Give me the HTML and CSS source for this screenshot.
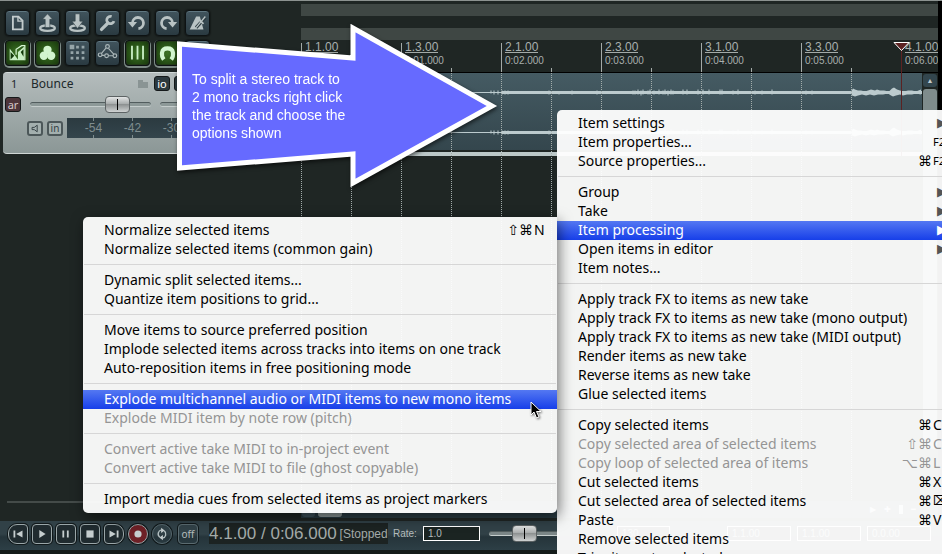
FILE: index.html
```html
<!DOCTYPE html>
<html lang="en">
<head>
<meta charset="utf-8">
<title>Bounce</title>
<link rel="stylesheet" href="styles.css">
</head>
<body>
<div class="app">
  <main class="workspace">
    <section class="side">
      <div class="toolbar">
        <button class="tool" aria-label="New project"><svg viewBox="0 0 25 26"><path d="M7.500 6h6l4.500 4.500V20H7.500z" fill="none" stroke="#c3cccd" stroke-width="2"/><path d="M13 6v5h5" fill="none" stroke="#c3cccd" stroke-width="1.500"/></svg></button>
        <button class="tool" aria-label="Open project"><svg viewBox="0 0 25 26"><ellipse cx="12.500" cy="18.500" rx="8" ry="3" fill="none" stroke="#b9c3c4" stroke-width="2.500"/><path d="M12.500 3l5.500 6h-3v9h-5V9H7z" fill="#b9c3c4" stroke="#2c3b41" stroke-width=".6"/></svg></button>
        <button class="tool" aria-label="Save project"><svg viewBox="0 0 25 26"><ellipse cx="12.500" cy="18.500" rx="8" ry="3" fill="none" stroke="#b9c3c4" stroke-width="2.500"/><path d="M10 3h5v8h3.500l-6 8-6-8H10z" fill="#b9c3c4" stroke="#2c3b41" stroke-width=".6"/></svg></button>
        <button class="tool" aria-label="Project settings"><svg viewBox="0 0 25 26"><path d="M6 20l7-7" stroke="#b9c3c4" stroke-width="3.500" stroke-linecap="round"/><path d="M17 6a4 4 0 1 0 2.500 5" fill="none" stroke="#b9c3c4" stroke-width="3"/></svg></button>
        <button class="tool" aria-label="Undo"><svg viewBox="0 0 25 26"><path d="M7 13a6 6 0 1 1 6.500 6" fill="none" stroke="#b9c3c4" stroke-width="3"/><path d="M2 12h10l-5 6z" fill="#b9c3c4"/></svg></button>
        <button class="tool" aria-label="Redo"><svg viewBox="0 0 25 26"><path d="M18 13a6 6 0 1 0-6.500 6" fill="none" stroke="#b9c3c4" stroke-width="3"/><path d="M23 12H13l5 6z" fill="#b9c3c4"/></svg></button>
        <button class="tool" aria-label="Metronome"><svg viewBox="0 0 25 26"><path d="M4 20L11 6h4l4 14z" fill="#b9c3c4"/><path d="M11 18L21 7" stroke="#2c3b41" stroke-width="3.500"/><path d="M11 18L21 6" stroke="#b9c3c4" stroke-width="1.500"/><path d="M15 10l4 4" stroke="#b9c3c4" stroke-width="2"/></svg></button>
        <button class="tool lit" aria-label="Auto-crossfade"><svg viewBox="0 0 25 26"><path d="M4 8l9 12V12l7-6v15H4z" fill="#c9efc5"/><path d="M5 12l4 4-4 4z M16 12l3-3v8z" fill="#123909"/><path d="M11 15V9l6-4h3.500v16" fill="none" stroke="#d8f7d4" stroke-width="1.300"/></svg></button>
        <button class="tool lit" aria-label="Item grouping"><svg viewBox="0 0 25 26"><g fill="#d2f5cf"><circle cx="12.500" cy="9.500" r="4.500"/><circle cx="8.500" cy="16" r="4.500"/><circle cx="16.500" cy="16" r="4.500"/></g></svg></button>
        <button class="tool" aria-label="Ripple editing"><svg viewBox="0 0 25 26"><path d="M4 4h5v5H4z M11 5h3v3h-3z M17 5h3v3h-3z M5 11h3v3H5z M11 11h3v3h-3z M17 11h3v3h-3z M5 17h3v3H5z M11 17h3v3h-3z M17 17h3v3h-3z" fill="#96a5a9"/></svg></button>
        <button class="tool" aria-label="Envelopes"><svg viewBox="0 0 25 26"><g fill="none" stroke="#aab6b8" stroke-width="1.300"><circle cx="4.500" cy="15" r="2"/><circle cx="12.500" cy="6" r="2"/><circle cx="11.500" cy="16" r="2"/><circle cx="20.500" cy="16" r="2"/><path d="M6 13.500l5-6M13.500 8l6 6.500M6.500 15.500h3M13.500 16h5"/></g></svg></button>
        <button class="tool lit" aria-label="Grid lines"><svg viewBox="0 0 25 26"><path d="M6.500 5v15M12.500 5v15M18.500 5v15" stroke="#c9efc5" stroke-width="2"/></svg></button>
        <button class="tool lit" aria-label="Snapping"><svg viewBox="0 0 25 26"><path d="M8.500 20c-3-4-3.500-12 4-12s7 8 4 12" fill="none" stroke="#d2f5cf" stroke-width="4.500"/></svg></button>
        <button class="tool" aria-label="Locking"></button>
      </div>

      <article class="track">
        <div class="track-head">
          <span class="track-no">1</span>
          <span class="track-name">Bounce</span>
          <svg class="folder" viewBox="0 0 10 8"><path d="M0 0h5v2h5v6H0z"/></svg>
          <button class="chip dark">io</button>
          <button class="chip dark" aria-label="Effects"></button>
        </div>
        <div class="track-mix">
          <button class="chip arm">ar</button>
          <input class="slider volume" type="range" min="0" max="100" value="78" aria-label="Volume">
          <input class="slider pan" type="range" min="0" max="100" value="50" aria-label="Pan">
        </div>
        <div class="track-meter">
          <button class="chip light" aria-label="Monitor"><svg viewBox="0 0 16 15"><path d="M4 6h3l4-3v9L7 9H4z" fill="none" stroke="#344044" stroke-width="1.300"/></svg></button>
          <button class="chip light">in</button>
          <div class="meter"><span>-54</span><span>-42</span><span>-30</span></div>
        </div>
      </article>
      <div class="side-line"></div>
    </section>

    <section class="arrange">
      <div class="lane"></div>
      <div class="lane"></div>
      <div class="ruler">
        <div class="mark"><b>1.1.00</b></div>
        <div class="mark"><b>1.3.00</b><i>0:01.000</i></div>
        <div class="mark"><b>2.1.00</b><i>0:02.000</i></div>
        <div class="mark"><b>2.3.00</b><i>0:03.000</i></div>
        <div class="mark"><b>3.1.00</b><i>0:04.000</i></div>
        <div class="mark"><b>3.3.00</b><i>0:05.000</i></div>
        <div class="mark last"><b>4.1.00</b><i>0:06.00</i></div>
      </div>
      <div class="tracks">
        <div class="canvas">
          <div class="item">
            <svg viewBox="0 0 621 77" width="621" height="77">
              <defs>
                <g id="wave" stroke="#bccbce">
                  <path d="M0 0H200"/>
                  <path d="M200 0H621" stroke-width="3"/>
                  <path d="M190-2v3M193-2v4M197-2v4M201-2v4M204-2v4M207-2v4M248-2v4M258-1v3M271-2v4M296-2v4"/>
                  <path d="M332-2v4M334-2v4M337-3v5M340-2v5M342-3v5M347-2v4M349-3v5M353-2v4M358-3v5M362-2v4M364-3v5M367-2v5M370-3v5M372-2v4M382-3v5M386-3v5M397-3v5M402-3v5M408-3v5M419-3v5M421-3v5M432-2v4M437-3v5M454-2v4M461-2v4M471-3v5M505-2v4M511-2v4"/>
                  <path stroke="none" fill="#bccbce" d="M550-1l2-3 2 1 3 1 3 0 4 1 3-1 3-1 4 1 2-1 3 1 4 0 5 1 3-3 2-1 3 2 3 1 4 1 4-1 4 0 4 1 5-2V2l-5-1-4 1-5 0-4 1-3-1-4 1-3 1-2-1-3-2-5 1-5 0-4 1-4-1-4 1-4-1-4 1-3 1-3-1z"/>
                </g>
              </defs>
              <use href="#wave" y="19.500"/>
              <use href="#wave" y="59.500"/>
            </svg>
          </div>
          <div class="grid-lines"></div>
          <div class="edit-cursor"><svg viewBox="0 0 17 10"><path d="M1 .5h15L8.500 8.500z" fill="#5b2222" stroke="#fff"/></svg></div>
        </div>
        <div class="vscroll"><button aria-label="Scroll up">▲</button><div></div></div>
      </div>
      <div class="hscroll"><button aria-label="Scroll left">◀</button><div class="hthumb"></div><div class="zoomers"><button aria-label="Scroll right">▶</button><button aria-label="Zoom in">✚</button><span></span><button aria-label="Zoom out">━</button></div></div>
    </section>
  </main>

  <footer class="transport">
    <div class="play-keys">
      <button class="key first" aria-label="Go to start"><svg viewBox="0 0 20 20"><path d="M5 6h2v8H5z M15 6v8l-7-4z"/></svg></button>
      <button class="key" aria-label="Play"><svg viewBox="0 0 20 20"><path d="M7 5.500l7 4.500-7 4.500z"/></svg></button>
      <button class="key" aria-label="Pause"><svg viewBox="0 0 20 20"><path d="M6 6h2v8H6z M11 6h2v8h-2z"/></svg></button>
      <button class="key" aria-label="Stop"><svg viewBox="0 0 20 20"><path d="M6 6h8v8H6z"/></svg></button>
      <button class="key end" aria-label="Go to end"><svg viewBox="0 0 20 20"><path d="M13 6h2v8h-2z M5 6v8l7-4z"/></svg></button>
      <button class="key record" aria-label="Record"><svg viewBox="0 0 20 20"><circle cx="10" cy="10" r="4"/></svg></button>
      <button class="key loop" aria-label="Repeat"><svg viewBox="0 0 20 20"><path d="M7.500 13.500a4.500 4.500 0 0 1 2-8M12.500 6.500a4.500 4.500 0 0 1-2 8" fill="none" stroke="#b4c0c2" stroke-width="1.500"/><path d="M9 3l4 3-4 3z M11 11l-4 3 4 3z"/></svg></button>
    </div>
    <button class="key off">off</button>
    <output class="clock"><span>4.1.00 / 0:06.000</span><small>[Stopped</small></output>
    <label class="rate" for="rate">Rate:</label>
    <input class="field" id="rate" value="1.0">
    <input class="slider speed" type="range" min="0" max="100" value="50" aria-label="Play rate">
    <input class="field" id="bpm" aria-label="Tempo" value="130">
    <input class="field wide" id="sel" aria-label="Selection start" value="1.1.00">
    <input class="field wide" aria-label="Selection end" value="1.1.00">
    <input class="field wide" aria-label="Selection length" value="0.0.00">
  </footer>

  <aside class="callout">
    <svg viewBox="0 0 324 166"><path d="M5.500 20L179 34V4L318 82 179 159v-29L5.500 144z" fill="#666aff" stroke="#fff" stroke-width="5"/></svg>
    <p>To split a stereo track to<br>2 mono tracks right click<br>the track and choose the<br>options shown</p>
  </aside>

  <ul class="menu context">
    <li><button>Item settings<kbd class="arrow">▶</kbd></button></li>
    <li><button>Item properties...<kbd class="fn">F2</kbd></button></li>
    <li><button>Source properties...<span>⌘</span><kbd class="fn">F2</kbd></button></li>
    <li class="rule"></li>
    <li><button>Group<kbd class="arrow">▶</kbd></button></li>
    <li><button>Take<kbd class="arrow">▶</kbd></button></li>
    <li><button class="active">Item processing<kbd class="arrow">▶</kbd></button></li>
    <li><button>Open items in editor<kbd class="arrow">▶</kbd></button></li>
    <li><button>Item notes...</button></li>
    <li class="rule"></li>
    <li><button>Apply track FX to items as new take</button></li>
    <li><button>Apply track FX to items as new take (mono output)</button></li>
    <li><button>Apply track FX to items as new take (MIDI output)</button></li>
    <li><button>Render items as new take</button></li>
    <li><button>Reverse items as new take</button></li>
    <li><button>Glue selected items</button></li>
    <li class="rule"></li>
    <li><button>Copy selected items<span>⌘</span><kbd>C</kbd></button></li>
    <li><button disabled>Copy selected area of selected items<span>⇧⌘</span><kbd>C</kbd></button></li>
    <li><button disabled>Copy loop of selected area of items<span>⌥⌘</span><kbd>L</kbd></button></li>
    <li><button>Cut selected items<span>⌘</span><kbd>X</kbd></button></li>
    <li><button>Cut selected area of selected items<span>⌘</span><kbd class="sym">⌦</kbd></button></li>
    <li><button>Paste<span>⌘</span><kbd>V</kbd></button></li>
    <li><button>Remove selected items</button></li>
    <li><button>Trim items to selected area</button></li>
  </ul>

  <ul class="menu submenu">
    <li><button>Normalize selected items<span>⇧⌘</span><kbd>N</kbd></button></li>
    <li><button>Normalize selected items (common gain)</button></li>
    <li class="rule"></li>
    <li><button>Dynamic split selected items...</button></li>
    <li><button>Quantize item positions to grid...</button></li>
    <li class="rule"></li>
    <li><button>Move items to source preferred position</button></li>
    <li><button>Implode selected items across tracks into items on one track</button></li>
    <li><button>Auto-reposition items in free positioning mode</button></li>
    <li class="rule"></li>
    <li><button class="active">Explode multichannel audio or MIDI items to new mono items</button></li>
    <li><button disabled>Explode MIDI item by note row (pitch)</button></li>
    <li class="rule"></li>
    <li><button disabled>Convert active take MIDI to in-project event</button></li>
    <li><button disabled>Convert active take MIDI to file (ghost copyable)</button></li>
    <li class="rule"></li>
    <li><button>Import media cues from selected items as project markers</button></li>
  </ul>

  <svg class="pointer" viewBox="0 0 12 18"><path d="M1 1v13l3-3 2.500 6 2.500-1-2.500-5.500H11z" fill="#000" stroke="#fff"/></svg>
</div>
</body>
</html>
```
FILE: styles.css
```css
* { box-sizing: border-box; }

body {
  margin: 0;
  background: #000;
  font-family: "Liberation Sans", sans-serif;
}

button, input { font: inherit; color: inherit; margin: 0; padding: 0; }
button { border: 0; background: none; }
svg { display: block; }

.app {
  position: relative;
  display: flex;
  flex-direction: column;
  height: 100vh;
  overflow: hidden;
  border-top: 1px solid #8c9290;
  background: #1f2624;
}

.workspace { flex: 1; display: flex; min-height: 0; }

/* Left column */
.side { flex: 0 0 301px; display: flex; flex-direction: column; padding: 9px 3px 0; }
.toolbar { display: grid; grid-template-columns: repeat(7, 25px); gap: 4px 5px; padding-left: 2px; }
.tool {
  height: 26px;
  border-radius: 4px;
  border: 1px solid #0d1213;
  background: linear-gradient(#41545d, #2a3a41);
  box-shadow: inset 0 1px 0 #5f7680, 0 0 2px #000;
}
.tool svg { width: 23px; height: 24px; }
.tool.lit {
  background: radial-gradient(#3c7424, #16350b);
  box-shadow: inset 0 0 0 1px #223a18, 0 1px 0 1px #7c8a85;
}

.track {
  display: flex;
  flex-direction: column;
  gap: 5px;
  height: 82px;
  margin-top: 6px;
  padding: 3px 2px;
  border-radius: 4px;
  background: linear-gradient(#b4bcbc, #8b9796);
  border-bottom: 1px solid #cfd6d5;
  border-top: 1px solid #d3dada;
  overflow: hidden;
}
.track-head, .track-mix, .track-meter { display: flex; align-items: center; }
.track-head { height: 15px; padding-left: 6px; font: 12px "Noto Sans", sans-serif; color: #20282a; }
.track-no { width: 20px; font-size: 11px; }
.track-name { flex: 0 0 107px; }
.folder { width: 10px; height: 8px; margin-right: 6px; fill: #8a9494; }
.chip {
  flex: none;
  width: 16px;
  height: 15px;
  border-radius: 3px;
  border: 1px solid #15191a;
  font: 11px/12px "Noto Sans", sans-serif;
  text-align: center;
}
.chip.dark { background: #2c393e; color: #fff; margin-right: 4px; }
.chip.arm { background: #4d3539; color: #d5c9ca; }
.chip.light { background: #a3afae; border: 2px solid #4c5759; color: #344044; font-size: 10px; line-height: 10px; }
.chip.light svg { width: 12px; height: 11px; }
.track-mix { height: 17px; gap: 9px; }
.track-meter { height: 20px; padding-left: 22px; gap: 4px; }
.meter {
  display: flex;
  height: 20px;
  width: 220px;
  padding-left: 7px;
  background: linear-gradient(#2b3a40, #34454c);
  color: #7f8d8f;
  font-size: 12px;
  line-height: 20px;
}
.meter span {
  flex: 0 0 39px;
  text-align: center;
  background:
    linear-gradient(#7f8d8f, #7f8d8f) top / 1px 3px no-repeat,
    linear-gradient(#7f8d8f, #7f8d8f) bottom / 1px 3px no-repeat;
}
.side-line { margin: auto 0 18px 4px; height: 2px; background: #444b49; }

/* Range sliders */
.slider { appearance: none; height: 17px; background: none; }
.slider::-webkit-slider-runnable-track {
  height: 5px;
  border-radius: 3px;
  background: #8d9998;
  border-top: 1px solid #525d5e;
  border-bottom: 1px solid #c5cdcc;
}
.slider::-webkit-slider-thumb {
  appearance: none;
  width: 25px;
  height: 17px;
  margin-top: -7px;
  border-radius: 4px;
  border: 1px solid #5d6364;
  background:
    linear-gradient(#000, #000) center / 1px 11px no-repeat,
    linear-gradient(#e3e5e5, #a9adad 45%, #8e9292 50%, #cfd2d2);
}
.volume { width: 121px; }
.pan { width: 90px; }
.speed { width: 70px; }
.speed::-webkit-slider-runnable-track { background: #7b8687; }

/* Arrange view */
.arrange {
  flex: 1;
  min-width: 0;
  display: flex;
  flex-direction: column;
  margin-right: 4px;
  padding-top: 3px;
  box-shadow: 4px 0 0 #000;
}
.lane { flex: none; height: 12px; background: #3f4744; }
.lane + .lane { margin-top: 12px; }
.ruler {
  flex: none;
  display: flex;
  height: 33px;
  padding-top: 3px;
  overflow: hidden;
  border-bottom: 1px solid #000;
  color: #a8afad;
}
.mark {
  flex: 0 0 100px;
  display: flex;
  flex-direction: column;
  align-items: flex-start;
  padding-left: 3px;
  border-left: 1px solid #a3aaa8;
  background: linear-gradient(#a3aaa8, #a3aaa8) 49px 100% / 1px 4px no-repeat;
}
.mark.last { border-color: transparent; flex-basis: 40px; background: none; }
.mark b { font-size: 12px; line-height: 9px; font-weight: 400; border-bottom: 1px solid #a3aaa8; }
.mark i { font-size: 10px; line-height: 16px; font-style: normal; }

.tracks { flex: 1; display: flex; min-height: 0; }
.canvas { position: relative; flex: 1; min-width: 0; }
.item {
  height: 83px;
  background: linear-gradient(#455b63, #34464d);
  background-size: 100% 77px;
  background-repeat: no-repeat;
  border-bottom: 4px solid #bcc8c8;
  overflow: hidden;
}
.grid-lines {
  position: absolute;
  inset: 0 60px 0 0;
  background: repeating-linear-gradient(#a3adab 0 1px, #0000 1px 2px);
  -webkit-mask: repeating-linear-gradient(90deg, #000 0 1px, #0000 1px 50px);
  mask: repeating-linear-gradient(90deg, #000 0 1px, #0000 1px 50px);
}
.edit-cursor { position: absolute; left: 600px; top: -31px; width: 1px; height: 114px; background: #5b2222; }
.edit-cursor svg { width: 17px; height: 10px; margin-left: -8px; }

.vscroll { width: 16px; display: flex; flex-direction: column; gap: 2px; padding: 1px; background: #1f2624; }
.vscroll button { flex: none; height: 13px; border-radius: 3px; background: #33464e; color: #c3cccd; font-size: 7px; }
.vscroll div { height: 360px; border-radius: 3px; background: #7f8c8c; }
.hscroll { flex: none; display: flex; align-items: center; gap: 3px; height: 17px; margin-bottom: 3px; padding-left: 1px; background: #2a3c43; color: #c3cccd; font-size: 8px; }
.hscroll > button { width: 13px; height: 14px; background: #41545d; border-radius: 3px; }
.hthumb { width: 24px; height: 14px; background: #8d9998; border-radius: 3px; }
.zoomers { display: flex; gap: 8px; margin-left: auto; padding-right: 22px; }
.zoomers span { width: 4px; background: #c3cccd; }

/* Transport */
.transport {
  flex: none;
  display: flex;
  align-items: center;
  height: 33px;
  padding: 0 8px 4px;
  border-bottom: 4px solid #141b19;
  background: linear-gradient(#314147 0 45%, #25343a 55%, #2d3f46);
  color: #b4bcbc;
  font-size: 10px;
  white-space: nowrap;
  overflow: hidden;
}
.play-keys { display: flex; gap: 4px; }
.key {
  flex: none;
  width: 20px;
  height: 20px;
  border: 1px solid #9aa6a8;
  border-radius: 4px;
  background: #202b2f;
  box-shadow: 0 0 0 1px #10181a;
}
.key svg { width: 18px; height: 18px; fill: #c5cdce; }
.key.first { border-radius: 9px 4px 4px 9px; }
.key.end { border-radius: 4px 9px 9px 4px; }
.key.record { border-radius: 50%; background: #6e2026; }
.key.loop { border-radius: 50%; background: none; border-color: #56676d; }
.key.off { margin: 0 11px 0 6px; background: none; border-color: #5b6b70; font: 10px "Noto Sans", sans-serif; color: #b4bcbc; }
.clock {
  flex: 0 0 179px;
  display: flex;
  align-items: center;
  gap: 3px;
  height: 21px;
  background: #1c2322;
  color: #a3aaa8;
  font-size: 17px;
}
.clock small { font-size: 12px; }
.rate { flex: 0 0 30px; margin-left: 5px; }
.field {
  flex: none;
  width: 57px;
  height: 15px;
  padding: 0 4px;
  border: 1px solid #fff;
  background: #1b2422;
  color: #b4bcbc;
  font-size: 10px;
}
.speed { margin: 0 0 0 9px; }
.transport .slider { flex: none; }
#bpm { width: 53px; margin-left: 58px; }
.field.wide { width: 64px; margin-left: 6px; }
#sel { margin-left: 57px; }

/* Arrow callout */
.callout { position: absolute; left: 174px; top: 23px; width: 324px; filter: drop-shadow(1px 2px 2px #0009); }
.callout p {
  position: absolute;
  left: 18px;
  top: 46px;
  margin: 0;
  color: #fff;
  font-size: 14px;
  line-height: 18px;
  white-space: nowrap;
}

/* Menus */
.menu {
  position: absolute;
  margin: 0;
  padding: 4px 0;
  list-style: none;
  background: #fffffff2;
  color: #000;
  font: 14px "Noto Sans", "DejaVu Sans", sans-serif;
  white-space: nowrap;
}
.context { left: 557px; top: 109px; width: 399px; border-radius: 5px 0 0 0; }
.submenu { left: 83px; top: 216px; width: 474px; border-radius: 5px 0 5px 5px; box-shadow: 2px 4px 14px #0008; }
.menu button {
  display: flex;
  align-items: center;
  width: 100%;
  height: 19px;
  padding: 0 0 2px 21px;
  text-align: left;
}
.menu span { margin-left: auto; font: 14px "DejaVu Sans", sans-serif; }
.menu kbd { flex: 0 0 24px; padding-left: 1px; font: inherit; }
.menu button > kbd:only-child { margin-left: auto; }
.menu .fn { font-size: 11px; }
.menu .arrow { flex-basis: 19px; padding: 0; font: 13px "DejaVu Sans", sans-serif; color: #555; }
.menu .sym { font: 13px "DejaVu Sans", sans-serif; }
.menu .active { background: linear-gradient(#5478f2, #173fe9); color: #fff; }
.menu .active .arrow { color: #fff; }
.menu button:disabled { color: #959595; }
.rule { height: 12px; margin: 0 1px; background: linear-gradient(#d6d6d6, #d6d6d6) 0 5px / 100% 1px no-repeat; }

.pointer { position: absolute; left: 530px; top: 400px; width: 12px; height: 18px; filter: drop-shadow(1px 1px 1px #0008); }
```
